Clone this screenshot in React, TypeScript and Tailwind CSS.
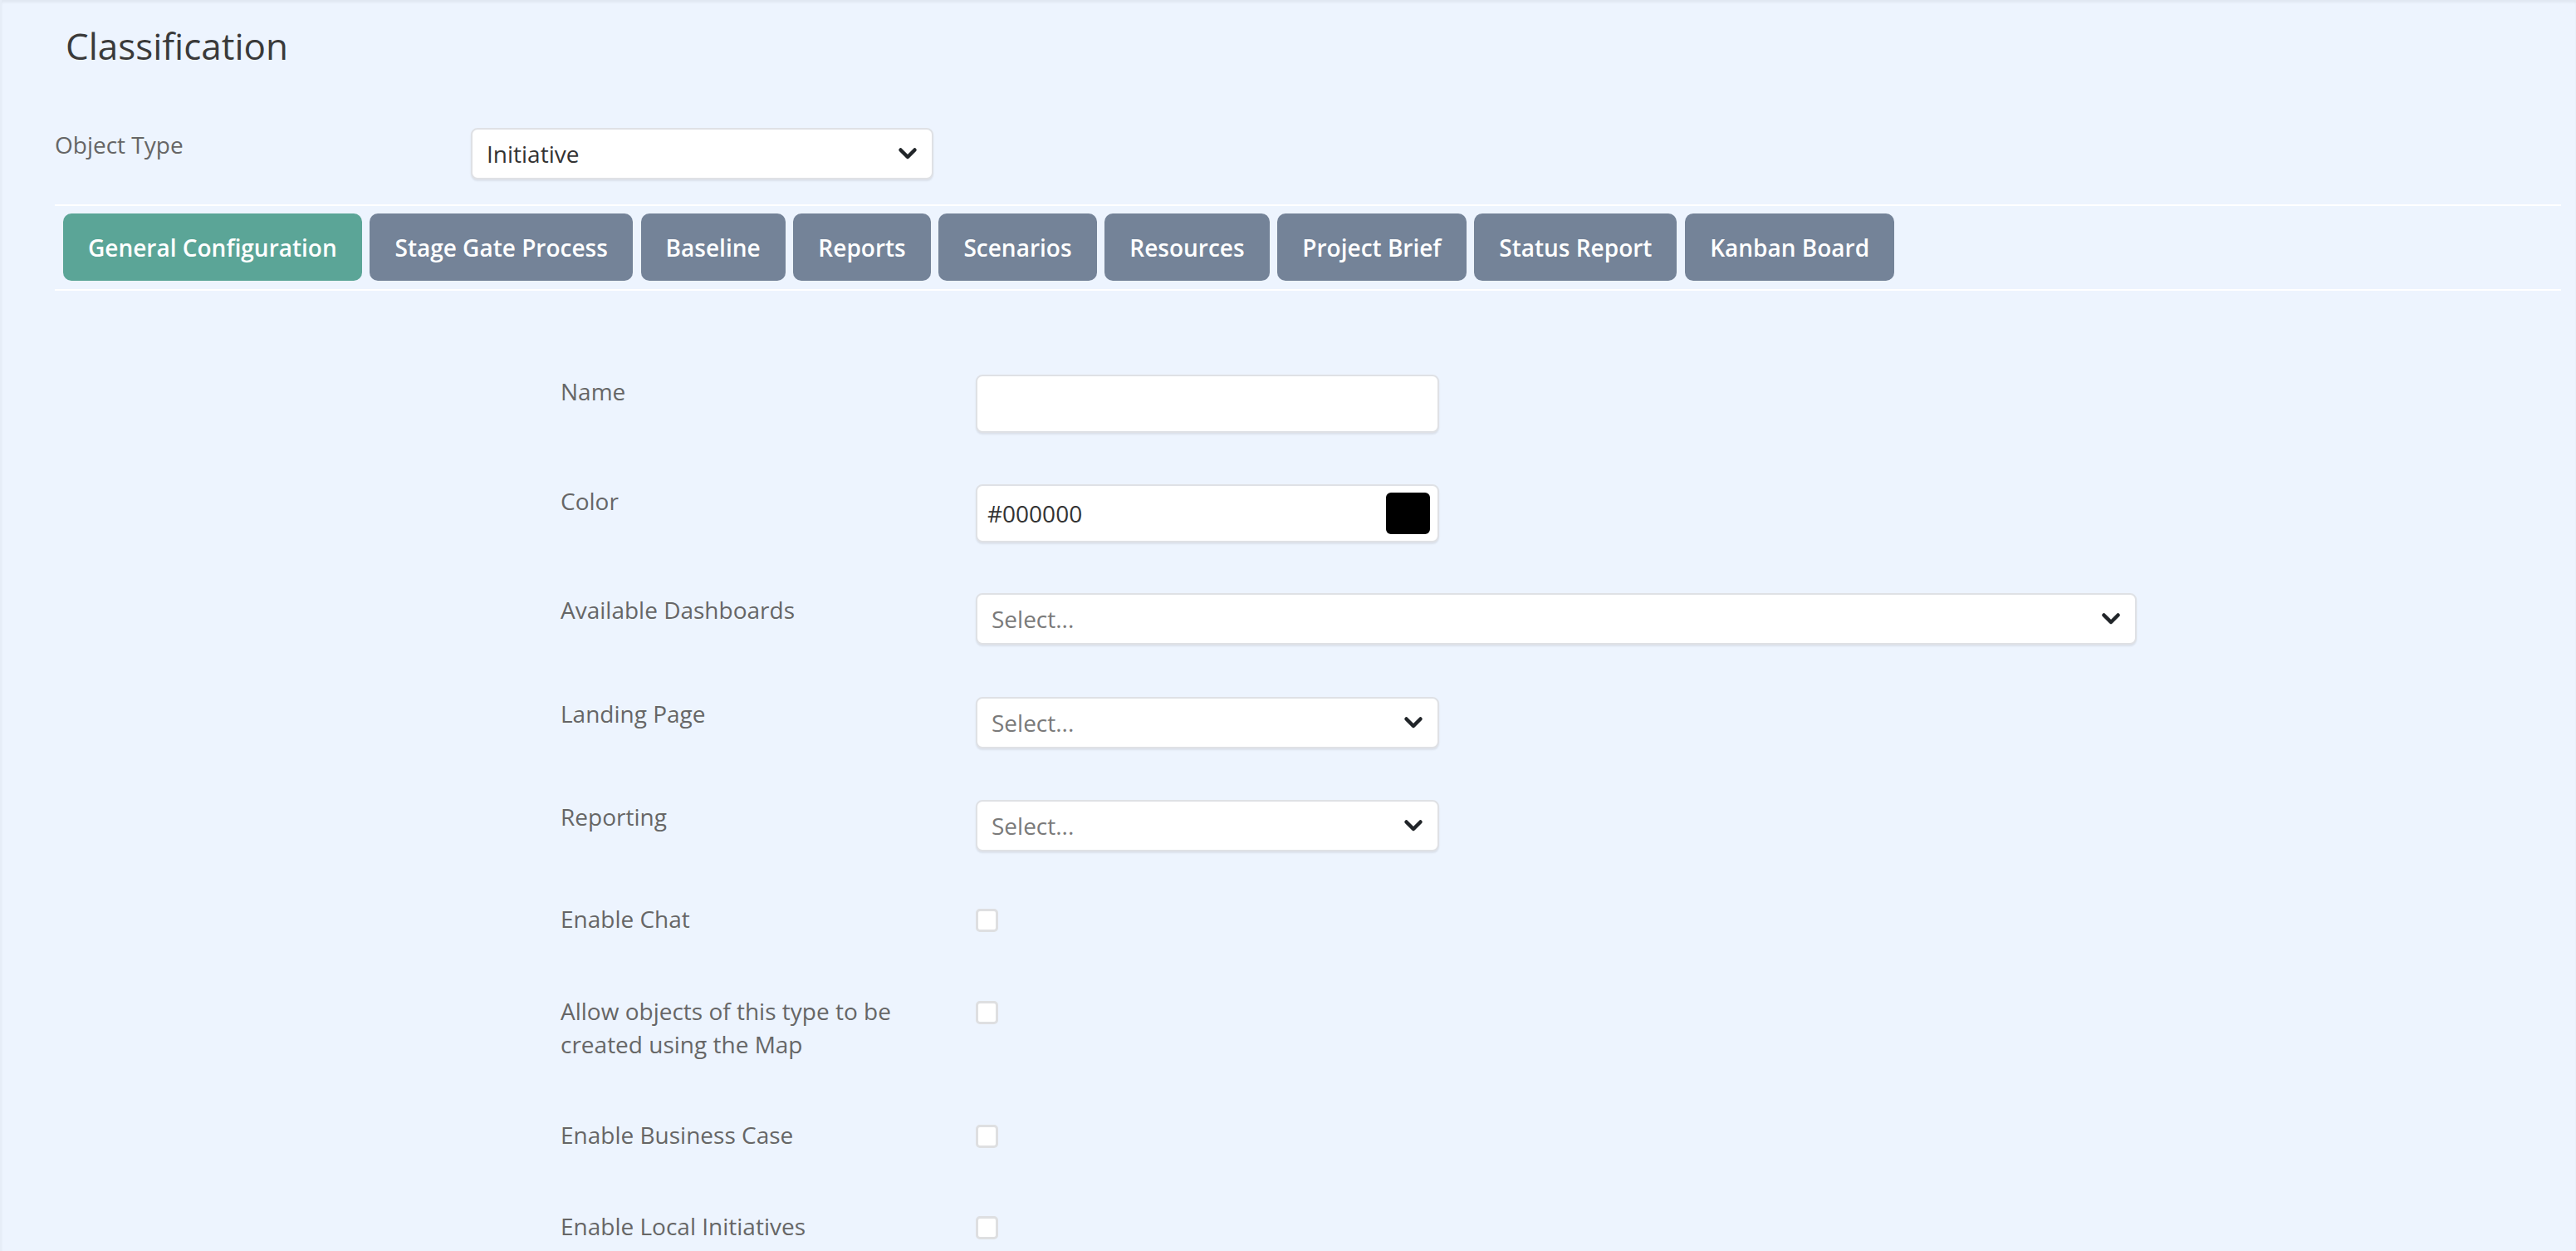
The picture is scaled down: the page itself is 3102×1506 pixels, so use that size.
import React from 'react'

const tabs = [
  'General Configuration',
  'Stage Gate Process',
  'Baseline',
  'Reports',
  'Scenarios',
  'Resources',
  'Project Brief',
  'Status Report',
  'Kanban Board',
]

function Chevron() {
  return (
    <svg width="24" height="16" viewBox="0 0 24 16" fill="none" className="shrink-0">
      <path d="M3.5 3.5 L12 12 L20.5 3.5" stroke="#212529" strokeWidth="4.5" strokeLinecap="round" strokeLinejoin="round" />
    </svg>
  )
}

function SelectBox({ value, placeholder, width }: { value?: string; placeholder?: string; width: string }) {
  return (
    <div className={`${width} h-[62px] flex items-center justify-between pl-[17px] pr-[17px] bg-white border-2 border-[#dfe1e5] rounded-[8px] shadow-[0_2px_2px_rgba(0,0,0,0.08)]`}>
      {value ? (
        <span className="text-[28px] leading-[40px] text-[#333]">{value}</span>
      ) : (
        <span className="text-[28px] leading-[40px] text-[#7a7a7a]">{placeholder}</span>
      )}
      <Chevron />
    </div>
  )
}

function Checkbox() {
  return <div className="mt-[8px] w-[27px] h-[28px] bg-white border-[3px] border-[#dedfe1] rounded-[5px]" />
}

function Row({ label, children, mb }: { label: React.ReactNode; children: React.ReactNode; mb: string }) {
  return (
    <div className={`flex items-start ${mb}`}>
      <div className="w-[500px] shrink-0 pr-[30px] text-[28px] leading-[40px] text-[#666]">{label}</div>
      {children}
    </div>
  )
}

export default function App() {
  return (
    <div className="min-h-screen bg-[#edf4fe] font-['Open_Sans',sans-serif] shadow-[inset_0_3px_3px_rgba(0,0,0,0.05)] border-l-2 border-[#e6edf7] pl-[64px] pr-[18px]">
      <h3 className="pt-[31px] ml-[13px] text-[44px] leading-[48px] text-[#3a3a3a] font-normal">Classification</h3>

      <div className="flex items-start mt-[75px]">
        <div className="w-[501px] shrink-0 text-[28px] leading-[40px] text-[#666]">Object Type</div>
        <SelectBox value="Initiative" width="w-[557px]" />
      </div>

      <div className="mt-[30px] border-t-2 border-white" />
      <div className="flex gap-[9.75px] ml-[10px] mt-[9px]">
        {tabs.map((t, i) => (
          <div
            key={t}
            className={`h-[81px] px-[30px] flex items-center rounded-[10px] text-white text-[28px] font-semibold ${i === 0 ? 'bg-[#5ba597]' : 'bg-[#748398]'}`}
          >
            {t}
          </div>
        ))}
      </div>
      <div className="mt-[10px] border-t-2 border-white" />

      <div className="ml-[609px] mt-[101px]">
        <Row label="Name" mb="mb-[62px]">
          <div className="w-[558px] h-[70px] bg-white border-2 border-[#dfe1e5] rounded-[8px] shadow-[0_2px_2px_rgba(0,0,0,0.08)]" />
        </Row>
        <Row label="Color" mb="mb-[61px]">
          <div className="w-[558px] h-[70px] flex items-center justify-between pl-[12px] pr-[9px] bg-white border-2 border-[#dfe1e5] rounded-[8px] shadow-[0_2px_2px_rgba(0,0,0,0.08)]">
            <span className="text-[28px] leading-[40px] text-[#333]">#000000</span>
            <div className="w-[53px] h-[50px] bg-black rounded-[6px]" />
          </div>
        </Row>
        <Row label="Available Dashboards" mb="mb-[63px]">
          <SelectBox placeholder="Select..." width="w-[1398px]" />
        </Row>
        <Row label="Landing Page" mb="mb-[62px]">
          <SelectBox placeholder="Select..." width="w-[558px]" />
        </Row>
        <Row label="Reporting" mb="mb-[61px]">
          <SelectBox placeholder="Select..." width="w-[558px]" />
        </Row>
        <Row label="Enable Chat" mb="mb-[71px]">
          <Checkbox />
        </Row>
        <Row label="Allow objects of this type to be created using the Map" mb="mb-[69px]">
          <Checkbox />
        </Row>
        <Row label="Enable Business Case" mb="mb-[70px]">
          <Checkbox />
        </Row>
        <Row label="Enable Local Initiatives" mb="mb-[70px]">
          <Checkbox />
        </Row>
      </div>
    </div>
  )
}
